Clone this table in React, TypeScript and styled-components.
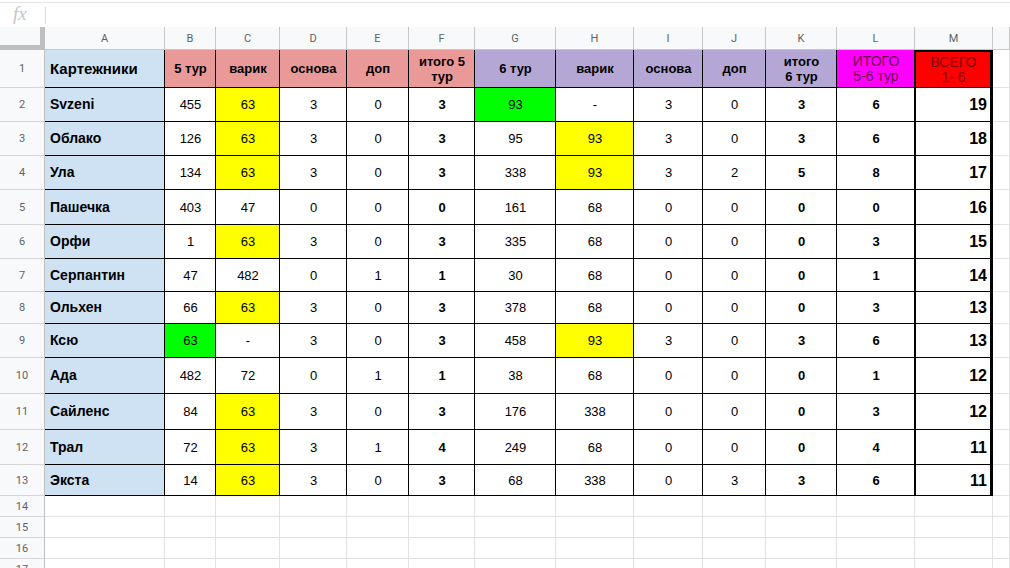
import React from "react";
import styled, { createGlobalStyle } from "styled-components";

const GlobalStyle = createGlobalStyle`
  html, body {
    margin: 0;
    padding: 0;
    background: #fff;
    font-family: "Liberation Sans", Arial, sans-serif;
  }
`;

const COL_WIDTHS = [45, 120, 51, 64, 67, 62, 66, 81, 78, 69, 63, 71, 78, 78];
const ROW_HEIGHTS = [38, 34, 34, 34, 35, 34, 33, 32, 34, 36, 36, 35, 31, 21, 21, 21, 21];
const LETTERS = ["A", "B", "C", "D", "E", "F", "G", "H", "I", "J", "K", "L", "M"];

const RED = "#ea9999";
const PURPLE = "#b4a7d6";
const BLUE = "#cfe2f3";
const YELLOW = "#ffff00";
const GREEN = "#00ff00";

interface HeadCell {
  text: string;
  bg: string;
  color?: string;
  weight?: number;
  size?: number;
}

const HEAD: HeadCell[] = [
  { text: "5 тур", bg: RED },
  { text: "варик", bg: RED },
  { text: "основа", bg: RED },
  { text: "доп", bg: RED },
  { text: "итого 5\nтур", bg: RED },
  { text: "6 тур", bg: PURPLE },
  { text: "варик", bg: PURPLE },
  { text: "основа", bg: PURPLE },
  { text: "доп", bg: PURPLE },
  { text: "итого\n6 тур", bg: PURPLE },
  { text: "ИТОГО\n5-6 тур", bg: "#ff00ff", color: "#6a0048", weight: 400, size: 14 },
  { text: "ВСЕГО\n1- 6", bg: "#ff0000", color: "#800000", weight: 400, size: 14 },
];

// "y" suffix = yellow fill, "g" suffix = green fill
const ROWS: [string, string[]][] = [
  ["Svzeni", ["455", "63y", "3", "0", "3", "93g", "-", "3", "0", "3", "6", "19"]],
  ["Облако", ["126", "63y", "3", "0", "3", "95", "93y", "3", "0", "3", "6", "18"]],
  ["Ула", ["134", "63y", "3", "0", "3", "338", "93y", "3", "2", "5", "8", "17"]],
  ["Пашечка", ["403", "47", "0", "0", "0", "161", "68", "0", "0", "0", "0", "16"]],
  ["Орфи", ["1", "63y", "3", "0", "3", "335", "68", "0", "0", "0", "3", "15"]],
  ["Серпантин", ["47", "482", "0", "1", "1", "30", "68", "0", "0", "0", "1", "14"]],
  ["Ольхен", ["66", "63y", "3", "0", "3", "378", "68", "0", "0", "0", "3", "13"]],
  ["Ксю", ["63g", "-", "3", "0", "3", "458", "93y", "3", "0", "3", "6", "13"]],
  ["Ада", ["482", "72", "0", "1", "1", "38", "68", "0", "0", "0", "1", "12"]],
  ["Сайленс", ["84", "63y", "3", "0", "3", "176", "338", "0", "0", "0", "3", "12"]],
  ["Трал", ["72", "63y", "3", "1", "4", "249", "68", "0", "0", "0", "4", "11"]],
  ["Экста", ["14", "63y", "3", "0", "3", "68", "338", "0", "3", "3", "6", "11"]],
];

const BOLD_COLS = [4, 9, 10, 11];
const LAST = 11;

const parseValue = (raw: string) => {
  const tail = raw.slice(-1);
  if (tail === "y") return { text: raw.slice(0, -1), bg: YELLOW };
  if (tail === "g") return { text: raw.slice(0, -1), bg: GREEN };
  return { text: raw, bg: "#fff" };
};

const App: React.FC = () => {
  const emptyRows = ROW_HEIGHTS.length - 1 - ROWS.length;

  return (
    <Page>
      <GlobalStyle />
      <FormulaBar>
        <Fx>fx</Fx>
        <FxDivider />
      </FormulaBar>
      <Sheet>
        <Corner />
        {LETTERS.map((l) => (
          <ColHead key={l}>{l}</ColHead>
        ))}
        <ColHead />

        {/* row 1: titles */}
        <RowHead>1</RowHead>
        <Cell $bg={BLUE} $align="left" $bold $size={15} $edge>
          Картежники
        </Cell>
        {HEAD.map((h, i) => (
          <Cell
            key={i}
            $bg={h.bg}
            $bold={h.weight !== 400}
            $color={h.color}
            $size={h.size}
            $edge
            $total={i === LAST}
            $topThick={i === LAST}
          >
            {h.text}
          </Cell>
        ))}
        <Cell />

        {ROWS.map(([name, values], r) => (
          <React.Fragment key={name}>
            <RowHead>{r + 2}</RowHead>
            <Cell $bg={BLUE} $align="left" $bold $size={14} $edge>
              {name}
            </Cell>
            {values.map((raw, c) => {
              const v = parseValue(raw);
              return (
                <Cell
                  key={c}
                  $bg={v.bg}
                  $bold={BOLD_COLS.includes(c)}
                  $align={c === LAST ? "right" : "center"}
                  $size={c === LAST ? 16 : 13}
                  $edge
                  $total={c === LAST}
                >
                  {v.text}
                </Cell>
              );
            })}
            <Cell />
          </React.Fragment>
        ))}

        {Array.from({ length: emptyRows }).map((_, r) => (
          <React.Fragment key={`e${r}`}>
            <RowHead>{ROWS.length + 2 + r}</RowHead>
            {LETTERS.map((l) => (
              <Cell key={l} />
            ))}
            <Cell />
          </React.Fragment>
        ))}
      </Sheet>
    </Page>
  );
};

export default App;

const Page = styled.div`
  width: 1010px;
  height: 568px;
  overflow: hidden;
  background: #fff;
`;

const FormulaBar = styled.div`
  box-sizing: border-box;
  height: 27px;
  display: flex;
  align-items: center;
  padding-left: 13px;
  border-top: 1px solid #e3e3e3;
  margin-top: 2px;
  margin-bottom: -2px;
  border-bottom: 1px solid #c4c7c5;
`;

const Fx = styled.span`
  font-family: "Liberation Serif", "DejaVu Serif", serif;
  font-style: italic;
  font-size: 19px;
  color: #c4c4c4;
  width: 32px;
  margin-top: -3px;
`;

const FxDivider = styled.div`
  width: 1px;
  height: 17px;
  background: #dadada;
`;

const Sheet = styled.div`
  display: grid;
  grid-template-columns: ${COL_WIDTHS.map((w) => `${w}px`).join(" ")} 1fr;
  grid-template-rows: 23px ${ROW_HEIGHTS.map((h) => `${h}px`).join(" ")};
`;

const Corner = styled.div`
  box-sizing: border-box;
  background: #f8f9fa;
  border-right: 5px solid #bfbfbf;
  border-bottom: 5px solid #bfbfbf;
`;

const ColHead = styled.div`
  box-sizing: border-box;
  display: flex;
  align-items: center;
  justify-content: center;
  background: #f8f9fa;
  border-right: 1px solid #c7c7c7;
  border-bottom: 1px solid #c7c7c7;
  font-family: Roboto, "Liberation Sans", sans-serif;
  font-size: 11px;
  color: #5f6368;
`;

const RowHead = styled.div`
  box-sizing: border-box;
  display: flex;
  align-items: center;
  justify-content: center;
  background: #f8f9fa;
  border-right: 1px solid #c0c0c0;
  border-bottom: 1px solid #d6d6d6;
  font-family: Roboto, "Liberation Sans", sans-serif;
  font-size: 11px;
  color: #5f6368;
`;

interface CellProps {
  $bg?: string;
  $bold?: boolean;
  $align?: "left" | "center" | "right";
  $size?: number;
  $color?: string;
  $edge?: boolean;
  $total?: boolean;
  $topThick?: boolean;
}

const Cell = styled.div<CellProps>`
  box-sizing: border-box;
  display: flex;
  align-items: center;
  justify-content: ${(p) =>
    p.$align === "left" ? "flex-start" : p.$align === "right" ? "flex-end" : "center"};
  padding: 0 ${(p) => (p.$align === "right" ? "3px" : "4px")} 0 5px;
  text-align: center;
  white-space: pre-line;
  line-height: 15px;
  background: ${(p) => p.$bg || "#fff"};
  color: ${(p) => p.$color || "#000"};
  font-size: ${(p) => p.$size || 13}px;
  font-weight: ${(p) => (p.$bold ? 700 : 400)};
  border-right: 1px solid ${(p) => (p.$edge ? "#000" : "#e2e2e2")};
  border-bottom: 1px solid ${(p) => (p.$edge ? "#000" : "#e2e2e2")};
  ${(p) =>
    p.$total &&
    `
    border-left: 2px solid #000;
    border-right: 3px solid #000;
    margin-left: -1px;
  `}
  ${(p) => p.$topThick && `border-top: 2px solid #000;`}
`;
